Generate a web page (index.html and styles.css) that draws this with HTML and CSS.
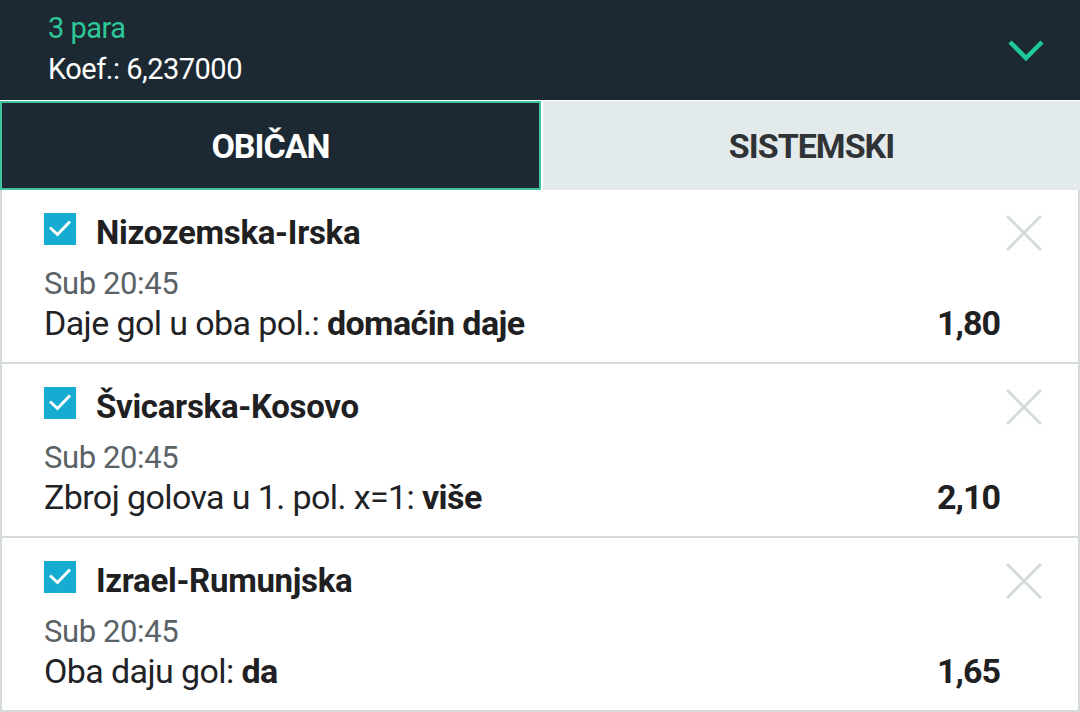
FILE: index.html
```html
<!DOCTYPE html>
<html lang="hr">
<head>
  <meta charset="UTF-8">
  <meta name="viewport" content="width=device-width, initial-scale=1.0">
  <title>Listić</title>
  <link rel="stylesheet" href="styles.css">
</head>
<body>

  <div class="slip-header">
    <div class="slip-summary">
      <div class="pairs">3 para</div>
      <div class="odds-total">Koef.: 6,237000</div>
    </div>
    <svg class="chevron" width="36" height="24" viewBox="0 0 36 24">
      <path d="M2 3 L18 19 L34 3" fill="none" stroke="#1fc998" stroke-width="4.5"/>
    </svg>
  </div>

  <div class="tabs">
    <div class="tab active">OBIČAN</div>
    <div class="tab">SISTEMSKI</div>
  </div>

  <div class="bets">
    <div class="bet">
      <div class="bet-top">
        <span class="check">
          <svg width="32" height="32" viewBox="0 0 32 32"><path d="M6 14.5 L13.5 21.5 L26 8.5" fill="none" stroke="#fff" stroke-width="3"/></svg>
        </span>
        <span class="match">Nizozemska-Irska</span>
        <svg class="remove" width="36" height="36" viewBox="0 0 36 36"><path d="M1 1 L35 35 M35 1 L1 35" stroke="#d3dcd9" stroke-width="3"/></svg>
      </div>
      <div class="time">Sub 20:45</div>
      <div class="bet-line">
        <span class="pick">Daje gol u oba pol.: <b>domaćin daje</b></span>
        <span class="odd">1,80</span>
      </div>
    </div>

    <div class="bet">
      <div class="bet-top">
        <span class="check">
          <svg width="32" height="32" viewBox="0 0 32 32"><path d="M6 14.5 L13.5 21.5 L26 8.5" fill="none" stroke="#fff" stroke-width="3"/></svg>
        </span>
        <span class="match">Švicarska-Kosovo</span>
        <svg class="remove" width="36" height="36" viewBox="0 0 36 36"><path d="M1 1 L35 35 M35 1 L1 35" stroke="#d3dcd9" stroke-width="3"/></svg>
      </div>
      <div class="time">Sub 20:45</div>
      <div class="bet-line">
        <span class="pick">Zbroj golova u 1. pol. x=1: <b>više</b></span>
        <span class="odd">2,10</span>
      </div>
    </div>

    <div class="bet">
      <div class="bet-top">
        <span class="check">
          <svg width="32" height="32" viewBox="0 0 32 32"><path d="M6 14.5 L13.5 21.5 L26 8.5" fill="none" stroke="#fff" stroke-width="3"/></svg>
        </span>
        <span class="match">Izrael-Rumunjska</span>
        <svg class="remove" width="36" height="36" viewBox="0 0 36 36"><path d="M1 1 L35 35 M35 1 L1 35" stroke="#d3dcd9" stroke-width="3"/></svg>
      </div>
      <div class="time">Sub 20:45</div>
      <div class="bet-line">
        <span class="pick">Oba daju gol: <b>da</b></span>
        <span class="odd">1,65</span>
      </div>
    </div>
  </div>

</body>
</html>
```

FILE: styles.css
```css
body {
  font-family: Roboto, "Noto Sans", sans-serif;
  margin: 0;
  padding: 0;
  background-color: #fff;
  color: #1f2326;
  overflow: hidden;
}
.slip-header {
  height: 100px;
  background-color: #1c2932;
  display: flex;
  align-items: center;
  justify-content: space-between;
  padding: 0 36px 0 48px;
}
.slip-summary {
  font-size: 29px;
  line-height: 41px;
  letter-spacing: -0.5px;
  margin-top: -3px;
}
.pairs {
  color: #2ec797;
}
.odds-total {
  color: #fff;
}
.chevron {
  display: block;
  margin-top: 2px;
}
.tabs {
  display: grid;
  grid-template-columns: 541px 1fr;
  column-gap: 2px;
  margin-top: 1px;
  height: 89px;
}
.tab {
  display: flex;
  align-items: center;
  justify-content: center;
  font-size: 34px;
  font-weight: bold;
  letter-spacing: -1px;
  background-color: #e3eaeb;
  color: #303336;
}
.tab.active {
  background-color: #1c2932;
  color: #fff;
  border: 2px solid #3fc59d;
}
.bets {
  border-left: 2px solid #d5dbdb;
  border-right: 2px solid #d5dbdb;
}
.bet {
  box-sizing: border-box;
  height: 174px;
  border-bottom: 2px solid #d5dbdb;
  padding: 23px 36px 0 42px;
}
.bet-top {
  display: flex;
  align-items: flex-start;
  height: 51px;
}
.check {
  width: 32px;
  height: 32px;
  background-color: #16acd2;
  flex-shrink: 0;
}
.check svg {
  display: block;
}
.match {
  margin-left: 20px;
  font-size: 33px;
  font-weight: bold;
  line-height: 40px;
  letter-spacing: -0.3px;
  color: #1f2022;
}
.remove {
  margin-left: auto;
  margin-top: 2px;
}
.time {
  font-size: 31px;
  line-height: 40px;
  letter-spacing: -0.4px;
  color: #5a6266;
}
.bet-line {
  display: flex;
  justify-content: space-between;
  font-size: 34px;
  line-height: 38px;
  letter-spacing: -0.6px;
  padding-right: 42px;
}
.odd {
  letter-spacing: -1px;
}
.pick b,
.odd {
  font-weight: bold;
  color: #1f2022;
}
```
